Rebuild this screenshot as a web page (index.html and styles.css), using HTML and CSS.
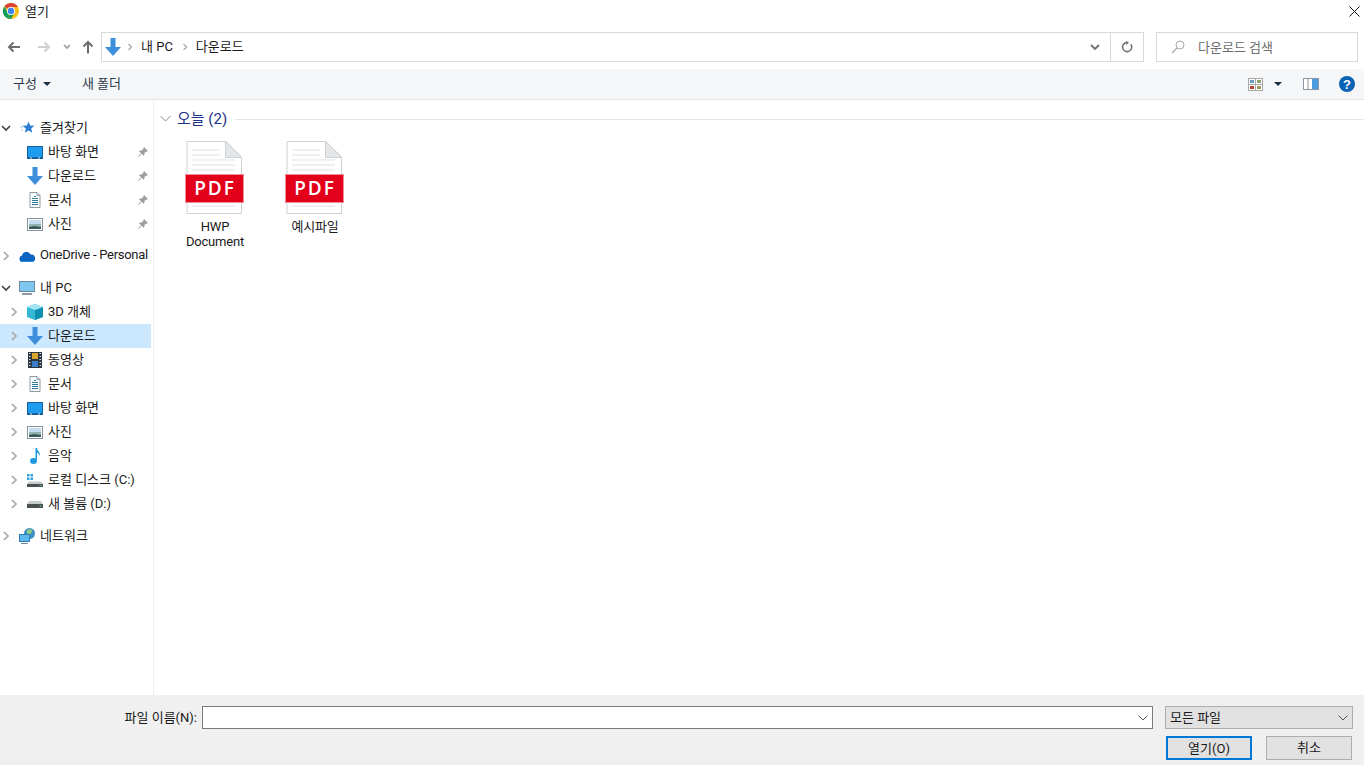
FILE: index.html
```html
<!DOCTYPE html>
<html lang="ko">

<head>
    <meta charset="UTF-8">
    <meta name="viewport" content="width=device-width, initial-scale=1.0">
    <title>열기</title>
    <link rel="stylesheet" href="styles.css">
</head>

<body>
    <svg class="defs" xmlns="http://www.w3.org/2000/svg">
        <symbol id="i-down" viewBox="0 0 16 18">
            <path d="M5.500 0h5v9H16l-8 9-8-9h5.500z" fill="#3d8fdb" />
        </symbol>
        <symbol id="i-desktop" viewBox="0 0 16 13">
            <rect x="0" y="0" width="16" height="13" fill="#17609e" />
            <rect x="1" y="1" width="14" height="10" fill="#1e9cf0" />
            <rect x="3" y="11.400" width="2" height="1" fill="#cfe8fa" />
            <rect x="11" y="11.400" width="2" height="1" fill="#cfe8fa" />
        </symbol>
        <symbol id="i-doc" viewBox="0 0 16 16">
            <path d="M3 .5h7l3 3v12H3z" fill="#fff" stroke="#8d9aa5" />
            <path d="M10 .5v3h3" fill="#dfe3e6" stroke="#8d9aa5" />
            <path d="M7 4.500h2M5 6.500h6M5 8.500h6M5 10.500h6M5 12.500h6" stroke="#2a7f9e" stroke-width="1" />
        </symbol>
        <symbol id="i-photo" viewBox="0 0 16 13">
            <rect x=".5" y=".5" width="15" height="12" fill="#fff" stroke="#8a9299" />
            <rect x="2" y="2" width="12" height="4" fill="#c3dcf0" />
            <path d="M2 6h12v5H2z" fill="#8fb3ad" />
            <path d="M2 9l5-1 7 1v2H2z" fill="#3a5c5a" />
        </symbol>
        <symbol id="i-pin" viewBox="0 0 10 10">
            <path d="M6 0l4 4-1 .7-.8-.3L6.300 6.300 6.500 8l-.8.800L3.700 6.700.8 9.800 0 9.200l3.100-3L1 4.200l.8-.8 1.800.2L5.500 1.800 5.300 1z" fill="#9aa0a5" />
        </symbol>
        <symbol id="i-chev-r" viewBox="0 0 8 10">
            <path d="M2 1l4 4-4 4" fill="none" stroke="#a6a6a6" stroke-width="1.600" />
        </symbol>
        <symbol id="i-chev-d" viewBox="0 0 10 8">
            <path d="M1 2l4 4 4-4" fill="none" stroke="#404040" stroke-width="1.600" />
        </symbol>
        <symbol id="i-pdf" viewBox="0 0 60 73">
            <path d="M2 .5h39L56.500 16v56.500H2z" fill="#fff" stroke="#cfd2d5" />
            <path d="M40.500 .5v16h16z" fill="#e4e6e8" stroke="#cfd2d5" />
            <path d="M7 9h28M7 14h28M7 19h43M7 24h43M7 29h43M7 65h43" stroke="#dcdfe2" />
            <rect x=".5" y="33.500" width="58" height="28" fill="#e2001a" stroke="#f08c98" />
        </symbol>
    </svg>

    <header class="titlebar">
        <svg class="chrome-logo" viewBox="0 0 16 16" width="16" height="16">
            <circle cx="8" cy="8" r="8" fill="#fbc116" />
            <path d="M8 0a8 8 0 0 1 6.930 4H8a4 4 0 0 0-3.460 2L1.600 3.200A8 8 0 0 1 8 0z" fill="#db4437" />
            <path d="M1.600 3.200L4.540 10 7 16A8 8 0 0 1 1.600 3.200z" fill="#0f9d58" />
            <path d="M4.540 10a4 4 0 0 0 6.900 0L8 16h-.9z" fill="#0f9d58" />
            <circle cx="8" cy="8" r="4" fill="#fff" />
            <circle cx="8" cy="8" r="3.200" fill="#4285f4" />
        </svg>
        <span class="title-text">열기</span>
        <svg class="close-icon" viewBox="0 0 11 11" width="11" height="11">
            <path d="M.5 .5l10 10M10.500 .5l-10 10" stroke="#111" stroke-width="1" />
        </svg>
    </header>

    <div class="addressbar">
        <div class="nav-buttons">
            <svg class="nav-back" viewBox="0 0 14 12" width="14" height="12">
                <path d="M13 6H2M6.500 1.500L2 6l4.500 4.500" fill="none" stroke="#6d6d6d" stroke-width="2" />
            </svg>
            <svg class="nav-forward" viewBox="0 0 14 12" width="14" height="12">
                <path d="M1 6h11M7.500 1.500L12 6l-4.500 4.500" fill="none" stroke="#d0d0d0" stroke-width="2" />
            </svg>
            <svg class="nav-recent" viewBox="0 0 8 6" width="8" height="6">
                <path d="M1 1l3 3 3-3" fill="none" stroke="#9a9a9a" stroke-width="1.600" />
            </svg>
            <svg class="nav-up" viewBox="0 0 12 14" width="12" height="14">
                <path d="M6 13.500V2M1.500 6.500L6 2l4.500 4.500" fill="none" stroke="#6d6d6d" stroke-width="2" />
            </svg>
        </div>
        <div class="breadcrumb">
            <svg class="crumb-icon" width="16" height="18"><use href="#i-down" /></svg>
            <svg class="crumb-sep" width="6" height="8"><use href="#i-chev-r" /></svg>
            <span class="crumb">내 PC</span>
            <svg class="crumb-sep" width="6" height="8"><use href="#i-chev-r" /></svg>
            <span class="crumb">다운로드</span>
            <svg class="crumb-drop" viewBox="0 0 10 6" width="10" height="6">
                <path d="M1 1l4 4 4-4" fill="none" stroke="#6f6f6f" stroke-width="1.800" />
            </svg>
            <div class="crumb-refresh">
                <svg viewBox="0 0 12 12" width="12" height="12">
                    <path d="M9.800 3.200A4.600 4.600 0 1 1 6 1.400" fill="none" stroke="#6f6f6f" stroke-width="1.500" />
                    <path d="M5 0l3 1.600L5.400 4z" fill="#6f6f6f" />
                </svg>
            </div>
        </div>
        <div class="search">
            <svg viewBox="0 0 14 14" width="14" height="14">
                <circle cx="9" cy="5" r="4" fill="none" stroke="#a8a8a8" />
                <path d="M6 8l-5 5" stroke="#a8a8a8" stroke-width="1.200" />
            </svg>
            <span>다운로드 검색</span>
        </div>
    </div>

    <div class="toolbar">
        <button class="tool-btn">구성<span class="caret"></span></button>
        <button class="tool-btn tool-new">새 폴더</button>
        <div class="tool-right">
            <svg class="view-icon" viewBox="0 0 15 13" width="15" height="13">
                <rect x=".5" y=".5" width="14" height="12" fill="#fff" stroke="#a9a9a9" />
                <path d="M7.500 0v13M0 6.500h15" stroke="#a9a9a9" />
                <rect x="2" y="2" width="4" height="3" fill="#6b9cc4" />
                <rect x="9" y="2" width="4" height="3" fill="#8aa36e" />
                <rect x="2" y="8" width="4" height="3" fill="#b5492f" />
                <rect x="9" y="8" width="4" height="3" fill="#9b9a5a" />
            </svg>
            <span class="caret view-caret"></span>
            <svg class="pane-icon" viewBox="0 0 16 12" width="16" height="12">
                <rect x=".5" y=".5" width="15" height="11" fill="#fff" stroke="#8c96a0" />
                <rect x="9" y="1" width="6" height="10" fill="#4a9be0" />
                <path d="M5 1v10" stroke="#8c96a0" />
            </svg>
            <span class="help-icon">?</span>
        </div>
    </div>

    <main class="main">
        <nav class="sidebar">
            <div class="tree-row lvl1 group-first">
                <svg class="chev" width="10" height="8"><use href="#i-chev-d" /></svg>
                <svg class="tree-icon" viewBox="0 0 16 16" width="16" height="16">
                    <path d="M9.500 1.500l1.700 4 4.300.3-3.300 2.800 1 4.200-3.700-2.300-3.700 2.300 1-4.200-3.300-2.800 4.300-.3z" fill="#2f80d0" />
                    <path d="M1 7h3M2 10h2" stroke="#9cc8ea" />
                </svg>
                <span class="tree-label">즐겨찾기</span>
            </div>
            <div class="tree-row lvl2">
                <span class="chev"></span>
                <svg class="tree-icon" width="16" height="13"><use href="#i-desktop" /></svg>
                <span class="tree-label">바탕 화면</span>
                <svg class="pin" width="10" height="10"><use href="#i-pin" /></svg>
            </div>
            <div class="tree-row lvl2">
                <span class="chev"></span>
                <svg class="tree-icon" width="16" height="18"><use href="#i-down" /></svg>
                <span class="tree-label">다운로드</span>
                <svg class="pin" width="10" height="10"><use href="#i-pin" /></svg>
            </div>
            <div class="tree-row lvl2">
                <span class="chev"></span>
                <svg class="tree-icon" width="16" height="16"><use href="#i-doc" /></svg>
                <span class="tree-label">문서</span>
                <svg class="pin" width="10" height="10"><use href="#i-pin" /></svg>
            </div>
            <div class="tree-row lvl2">
                <span class="chev"></span>
                <svg class="tree-icon" width="16" height="13"><use href="#i-photo" /></svg>
                <span class="tree-label">사진</span>
                <svg class="pin" width="10" height="10"><use href="#i-pin" /></svg>
            </div>

            <div class="tree-row lvl1 group-first">
                <svg class="chev" width="10" height="10"><use href="#i-chev-r" /></svg>
                <svg class="tree-icon" viewBox="0 0 16 11" width="16" height="11">
                    <path d="M3.500 11A3.300 3.300 0 0 1 3 4.500 4.500 4.500 0 0 1 11.500 3.500 3.800 3.800 0 0 1 13 11z" fill="#0a64c0" />
                    <path d="M1 10l14 0-1.500 1h-11z" fill="#1b8ae0" />
                </svg>
                <span class="tree-label tight">OneDrive - Personal</span>
            </div>

            <div class="tree-row lvl1 group-first">
                <svg class="chev" width="10" height="8"><use href="#i-chev-d" /></svg>
                <svg class="tree-icon" viewBox="0 0 16 14" width="16" height="14">
                    <rect x=".5" y=".5" width="15" height="10" fill="#7fc6f0" stroke="#6b8aa0" />
                    <path d="M3 13h10" stroke="#8d9aa5" stroke-width="2" />
                </svg>
                <span class="tree-label">내 PC</span>
            </div>
            <div class="tree-row lvl2">
                <svg class="chev" width="10" height="10"><use href="#i-chev-r" /></svg>
                <svg class="tree-icon" viewBox="0 0 16 16" width="16" height="16">
                    <path d="M8 0l8 3v10l-8 3-8-3V3z" fill="#35b8d6" />
                    <path d="M8 6l8-3v10l-8 3z" fill="#0f8fb0" />
                    <path d="M8 0l8 3-8 3-8-3z" fill="#a5e6f2" />
                </svg>
                <span class="tree-label">3D 개체</span>
            </div>
            <div class="tree-row lvl2 selected">
                <svg class="chev" width="10" height="10"><use href="#i-chev-r" /></svg>
                <svg class="tree-icon" width="16" height="18"><use href="#i-down" /></svg>
                <span class="tree-label">다운로드</span>
            </div>
            <div class="tree-row lvl2">
                <svg class="chev" width="10" height="10"><use href="#i-chev-r" /></svg>
                <svg class="tree-icon" viewBox="0 0 14 16" width="16" height="16">
                    <rect width="14" height="16" fill="#2b3640" />
                    <path d="M1 1.500h1.500M1 4.500h1.500M1 7.500h1.500M1 10.500h1.500M1 13.500h1.500M11.500 1.500H13M11.500 4.500H13M11.500 7.500H13M11.500 10.500H13M11.500 13.500H13" stroke="#dfe5ea" />
                    <rect x="4" y="1" width="6" height="6" fill="#d6a72f" />
                    <rect x="4" y="9" width="6" height="6" fill="#3a7fc8" />
                </svg>
                <span class="tree-label">동영상</span>
            </div>
            <div class="tree-row lvl2">
                <svg class="chev" width="10" height="10"><use href="#i-chev-r" /></svg>
                <svg class="tree-icon" width="16" height="16"><use href="#i-doc" /></svg>
                <span class="tree-label">문서</span>
            </div>
            <div class="tree-row lvl2">
                <svg class="chev" width="10" height="10"><use href="#i-chev-r" /></svg>
                <svg class="tree-icon" width="16" height="13"><use href="#i-desktop" /></svg>
                <span class="tree-label">바탕 화면</span>
            </div>
            <div class="tree-row lvl2">
                <svg class="chev" width="10" height="10"><use href="#i-chev-r" /></svg>
                <svg class="tree-icon" width="16" height="13"><use href="#i-photo" /></svg>
                <span class="tree-label">사진</span>
            </div>
            <div class="tree-row lvl2">
                <svg class="chev" width="10" height="10"><use href="#i-chev-r" /></svg>
                <svg class="tree-icon" viewBox="0 0 16 16" width="16" height="16">
                    <ellipse cx="6.500" cy="13" rx="3.500" ry="3" fill="#1e9ae0" />
                    <path d="M8.500 13V0h1.500c.2 3 3.500 4 3 8-.8-2-2-3-3-3.300V13z" fill="#1e9ae0" />
                </svg>
                <span class="tree-label">음악</span>
            </div>
            <div class="tree-row lvl2">
                <svg class="chev" width="10" height="10"><use href="#i-chev-r" /></svg>
                <svg class="tree-icon" viewBox="0 0 16 14" width="16" height="14">
                    <path d="M0 1h2.500v2.500H0zM3.500 1H6v2.500H3.500zM0 4.500h2.500V7H0zM3.500 4.500H6V7H3.500z" fill="#2fa4e0" />
                    <path d="M2 8.500h12L16 11H0z" fill="#c5cacd" />
                    <rect y="11" width="16" height="3" fill="#4a4f52" />
                    <rect x="12.500" y="12" width="2" height="1" fill="#5fd35f" />
                </svg>
                <span class="tree-label">로컬 디스크 (C:)</span>
            </div>
            <div class="tree-row lvl2">
                <svg class="chev" width="10" height="10"><use href="#i-chev-r" /></svg>
                <svg class="tree-icon" viewBox="0 0 16 7" width="16" height="7">
                    <path d="M2 0h12l2 3H0z" fill="#c5cacd" />
                    <rect y="3" width="16" height="4" fill="#4a4f52" />
                    <rect x="12.500" y="4.500" width="2" height="1" fill="#5fd35f" />
                </svg>
                <span class="tree-label">새 볼륨 (D:)</span>
            </div>

            <div class="tree-row lvl1 group-first">
                <svg class="chev" width="10" height="10"><use href="#i-chev-r" /></svg>
                <svg class="tree-icon" viewBox="0 0 16 16" width="16" height="16">
                    <circle cx="10.500" cy="5.500" r="5.500" fill="#3d8fc4" />
                    <path d="M8 2l4-1 1 3-3 3-2-2z" fill="#8fcf7a" />
                    <rect x=".5" y="6.500" width="10" height="7" fill="#5cb8ee" stroke="#2f7cb5" />
                    <path d="M2 15.500h7" stroke="#6b8aa0" />
                </svg>
                <span class="tree-label">네트워크</span>
            </div>
        </nav>

        <section class="content">
            <div class="group-header">
                <svg viewBox="0 0 11 7" width="11" height="7">
                    <path d="M.5 1L5.500 6l5-5" fill="none" stroke="#8a8a8a" />
                </svg>
                <span class="group-title">오늘 (2)</span>
                <span class="group-line"></span>
            </div>
            <div class="files">
                <div class="file">
                    <div class="pdf-icon">
                        <svg width="60" height="73"><use href="#i-pdf" /></svg>
                        <span class="pdf-label">PDF</span>
                    </div>
                    <span class="file-name">HWP Document</span>
                </div>
                <div class="file">
                    <div class="pdf-icon">
                        <svg width="60" height="73"><use href="#i-pdf" /></svg>
                        <span class="pdf-label">PDF</span>
                    </div>
                    <span class="file-name">예시파일</span>
                </div>
            </div>
        </section>
    </main>

    <footer class="footer">
        <div class="footer-row">
            <label class="name-label">파일 이름(N):</label>
            <div class="name-input">
                <svg viewBox="0 0 10 6" width="10" height="6">
                    <path d="M.5 .5L5 5l4.500-4.500" fill="none" stroke="#555" />
                </svg>
            </div>
            <div class="type-select">
                <span class="type-text">모든 파일</span>
                <svg viewBox="0 0 10 6" width="10" height="6">
                    <path d="M.5 .5L5 5l4.500-4.500" fill="none" stroke="#555" />
                </svg>
            </div>
        </div>
        <div class="footer-row footer-buttons">
            <button class="dlg-btn dlg-default">열기(O)</button>
            <button class="dlg-btn">취소</button>
        </div>
    </footer>
</body>

</html>
```

FILE: styles.css
```css
* {
    box-sizing: border-box;
}

html,
body {
    height: 100%;
}

body {
    margin: 0;
    display: flex;
    flex-direction: column;
    height: 765px;
    overflow: hidden;
    background-color: #fff;
    color: #1a1a1a;
    font-family: Roboto, "Noto Sans CJK KR", sans-serif;
    font-size: 13px;
}

button {
    font: inherit;
    color: inherit;
}

.defs {
    display: none;
}

/* title bar */
.titlebar {
    display: flex;
    align-items: center;
    height: 24px;
    padding: 0 4px 2px 3px;
    flex-shrink: 0;
}

.title-text {
    margin-left: 6px;
    padding-bottom: 2px;
}

.close-icon {
    margin-left: auto;
    margin-top: 1px;
}

/* address row */
.addressbar {
    display: flex;
    height: 30px;
    margin-top: 8px;
    padding-right: 6px;
    flex-shrink: 0;
}

.nav-buttons {
    display: flex;
    align-items: center;
    width: 101px;
    padding-left: 7px;
}

.nav-forward {
    margin-left: 16px;
}

.nav-recent {
    margin-left: 12px;
}

.nav-up {
    margin-left: 11px;
}

.breadcrumb {
    display: flex;
    align-items: center;
    width: 1043px;
    border: 1px solid #d9d9d9;
    padding-left: 3px;
}

.crumb-icon {
    margin-right: 6px;
}

.crumb {
    margin: 0 8px;
    padding-bottom: 4px;
}

.crumb + .crumb-sep {
    margin-left: 1px;
}

.crumb-drop {
    margin-left: auto;
    margin-right: 10px;
}

.crumb-refresh {
    display: flex;
    align-items: center;
    justify-content: center;
    width: 33px;
    height: 100%;
    border-left: 1px solid #d9d9d9;
}

.search {
    display: flex;
    align-items: center;
    width: 202px;
    margin-left: 12px;
    padding-left: 14px;
    border: 1px solid #d9d9d9;
    color: #6d6d6d;
}

.search span {
    margin-left: 13px;
    padding-bottom: 2px;
}

/* toolbar */
.toolbar {
    display: flex;
    align-items: center;
    height: 31px;
    margin-top: 7px;
    padding: 0 9px 0 13px;
    background-color: #f5f6f7;
    border-bottom: 1px solid #e5e5e5;
    color: #2d3a4a;
    flex-shrink: 0;
}

.tool-btn {
    display: flex;
    align-items: center;
    padding: 0 0 4px;
    border: none;
    background: none;
}

.tool-btn .caret {
    margin-top: 4px;
}

.tool-new {
    margin-left: 31px;
}

.caret {
    width: 0;
    height: 0;
    margin-left: 6px;
    border-left: 4px solid transparent;
    border-right: 4px solid transparent;
    border-top: 4px solid #1f2f45;
}

.tool-right {
    display: flex;
    align-items: center;
    margin-left: auto;
}

.view-caret {
    margin-left: 11px;
}

.pane-icon {
    margin-left: 21px;
}

.help-icon {
    display: flex;
    align-items: center;
    justify-content: center;
    width: 16px;
    height: 16px;
    margin-left: 20px;
    border-radius: 50%;
    background-color: #0a63b4;
    color: #fff;
    font-family: "Liberation Sans", sans-serif;
    font-size: 13px;
    font-weight: bold;
}

/* main area */
.main {
    display: flex;
    flex: 1;
    min-height: 0;
}

.sidebar {
    width: 154px;
    padding: 8px 2px 0 0;
    border-right: 1px solid #f0f0f0;
    flex-shrink: 0;
}

.tree-row {
    display: flex;
    align-items: center;
    height: 24px;
    white-space: nowrap;
}

.tree-label {
    padding-bottom: 4px;
}

.tight {
    letter-spacing: -.28px;
}

.group-first {
    margin-top: 8px;
}

.lvl1 {
    padding-left: 1px;
}

.lvl2 {
    padding-left: 9px;
}

.selected {
    background-color: #cce8ff;
}

.chev {
    display: block;
    width: 10px;
    margin-right: 8px;
    flex-shrink: 0;
}

.tree-icon {
    margin-right: 5px;
    flex-shrink: 0;
}

.pin {
    margin-left: auto;
    margin-right: 3px;
}

/* file area */
.content {
    flex: 1;
    padding: 8px 0 0 6px;
}

.group-header {
    display: flex;
    align-items: center;
    height: 20px;
}

.group-title {
    margin-left: 6px;
    padding-bottom: 2px;
    color: #1e3287;
    font-size: 15px;
}

.group-line {
    flex: 1;
    height: 1px;
    margin-left: 8px;
    margin-top: 3px;
    background-color: #e5e5e5;
}

.files {
    display: flex;
    margin-top: 13px;
    padding-left: 5px;
}

.file {
    display: flex;
    flex-direction: column;
    align-items: center;
    width: 100px;
}

.pdf-icon {
    position: relative;
    width: 60px;
    height: 73px;
}

.pdf-label {
    position: absolute;
    left: 0;
    right: 0;
    top: 33px;
    height: 28px;
    line-height: 28px;
    text-align: center;
    color: #fff;
    font-family: "Open Sans", sans-serif;
    font-size: 19px;
    font-weight: 600;
    letter-spacing: 2px;
}

.file-name {
    width: 70px;
    margin-top: 5px;
    line-height: 15px;
    text-align: center;
    letter-spacing: -.2px;
}

/* footer */
.footer {
    height: 70px;
    padding: 11px 11px 0 0;
    background-color: #f0f0f0;
    flex-shrink: 0;
}

.footer-row {
    display: flex;
    align-items: center;
    justify-content: flex-end;
}

.name-label {
    margin-right: 5px;
    padding-bottom: 2px;
}

.name-input {
    display: flex;
    align-items: center;
    justify-content: flex-end;
    width: 951px;
    height: 23px;
    padding-right: 4px;
    background-color: #fff;
    border: 1px solid #7a7a7a;
}

.type-select {
    display: flex;
    align-items: center;
    justify-content: space-between;
    width: 188px;
    height: 23px;
    margin-left: 12px;
    padding: 0 4px;
    background-color: #e1e1e1;
    border: 1px solid #adadad;
}

.type-text {
    padding-bottom: 2px;
}

.footer-buttons {
    gap: 14px;
    margin-top: 7px;
    padding-right: 1px;
}

.dlg-btn {
    width: 86px;
    height: 24px;
    padding: 0 0 3px;
    background-color: #e1e1e1;
    border: 1px solid #adadad;
}

.dlg-default {
    border: 2px solid #0078d7;
}
```
